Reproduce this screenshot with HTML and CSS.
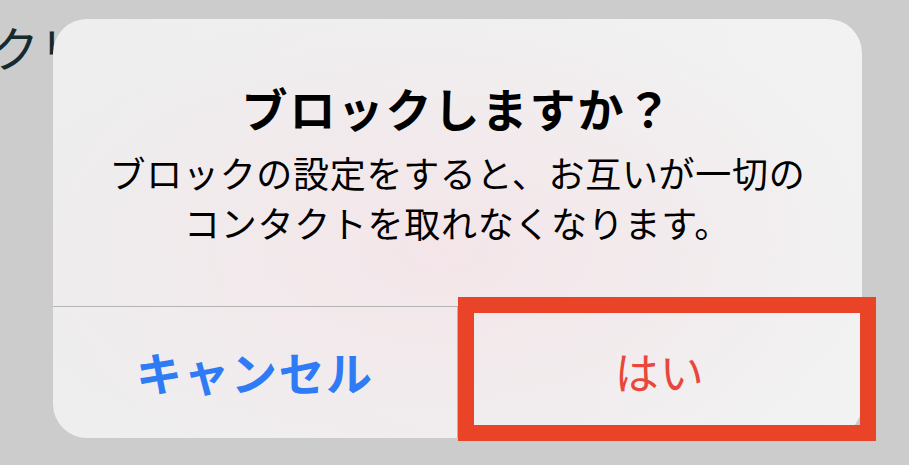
FILE: index.html
```html
<!DOCTYPE html>
<html lang="ja">
<head>
<meta charset="utf-8">
<title>ブロック</title>
<link rel="stylesheet" href="styles.css">
</head>
<body>
  <div class="page">
    <p class="page-heading">クリ</p>
  </div>

  <div class="alert" role="alertdialog">
    <div class="alert-body">
      <h1 class="alert-title">ブロックしますか？</h1>
      <p class="alert-message">ブロックの設定をすると、お互いが一切の<br>コンタクトを取れなくなります。</p>
    </div>
    <div class="alert-actions">
      <button class="alert-btn alert-btn-cancel">キャンセル</button>
      <button class="alert-btn alert-btn-destructive">はい</button>
    </div>
  </div>

  <div class="highlight"></div>
</body>
</html>
```

FILE: styles.css
```css
* {
  box-sizing: border-box;
}

html, body {
  margin: 0;
  padding: 0;
  width: 909px;
  height: 465px;
  overflow: hidden;
}

body {
  position: relative;
  background: #cccccc;
  font-family: "Noto Sans CJK JP", "Noto Sans", sans-serif;
}

.page {
  padding-top: 22px;
}

.page-heading {
  margin: 0 0 0 -9px;
  font-size: 48px;
  line-height: 48px;
  color: #15292f;
  white-space: nowrap;
}

/* alert sheet sits over the page */
.alert {
  position: absolute;
  left: 53px;
  top: 19px;
  width: 809px;
  height: 419px;
  border-radius: 34px;
  overflow: hidden;
  display: flex;
  flex-direction: column;
  background:
    radial-gradient(ellipse 55% 60% at 48% 55%, rgba(244, 228, 232, 0.9), rgba(240, 240, 240, 0) 100%),
    linear-gradient(90deg, #eeeeee, #f2f2f2);
}

.alert-body {
  height: 288px;
  padding-top: 58px;
  display: flex;
  flex-direction: column;
  align-items: center;
  border-bottom: 1px solid #b4b4b4;
}

.alert-title {
  margin: 0;
  font-size: 46px;
  line-height: 60px;
  font-weight: 700;
  color: #000;
  letter-spacing: 2px;
}

.alert-message {
  margin: 10px 0 0;
  font-size: 36px;
  line-height: 50px;
  font-weight: 400;
  color: #000;
  text-align: center;
  letter-spacing: 0.7px;
}

.alert-actions {
  flex: 1;
  display: grid;
  grid-template-columns: 1fr 1fr;
}

.alert-btn {
  border: 0;
  background: transparent;
  font-family: inherit;
  padding: 0 0 4px;
  cursor: pointer;
}

.alert-btn-cancel {
  font-size: 46px;
  font-weight: 700;
  color: #2f7bf5;
  letter-spacing: 1.5px;
  border-right: 1px solid #b4b4b4;
}

.alert-btn-destructive {
  font-size: 44px;
  font-weight: 400;
  color: #e8473a;
  letter-spacing: 1px;
}

/* red outline drawn around the confirm button */
.highlight {
  position: absolute;
  left: 458px;
  top: 297px;
  width: 418px;
  height: 144px;
  border: 16px solid #e94328;
}
```
